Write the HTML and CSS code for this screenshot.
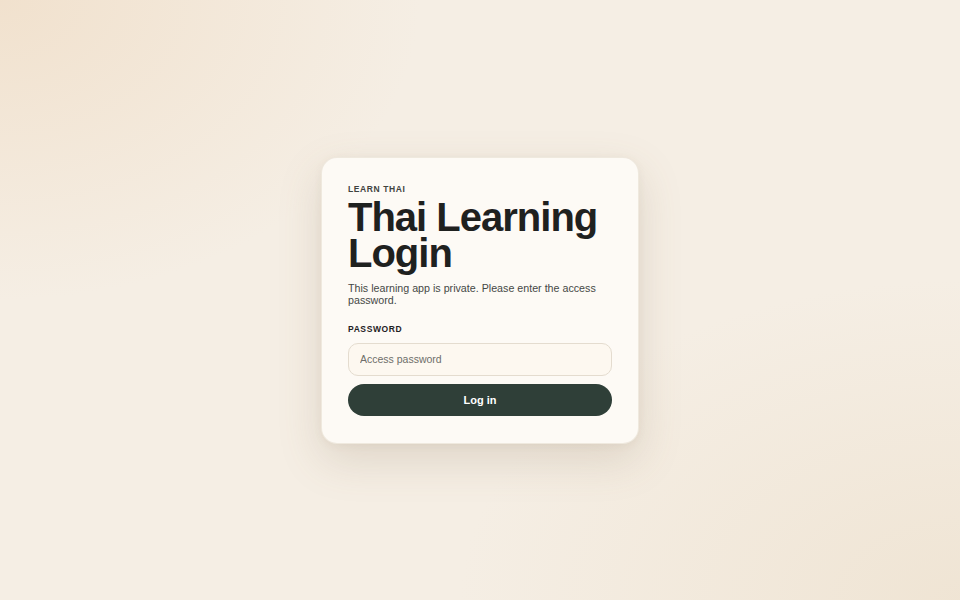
FILE: index.html
```html
<!DOCTYPE html>
<html lang="en">
<head>
<meta charset="utf-8">
<title>Thai Learning Login</title>
<link rel="stylesheet" href="styles.css">
</head>
<body>
<main class="page">
  <form class="card">
    <p class="eyebrow">LEARN THAI</p>
    <h1 class="title">Thai Learning Login</h1>
    <p class="lead">This learning app is private. Please enter the access password.</p>
    <label class="label" for="pw">PASSWORD</label>
    <input class="input" id="pw" type="password" placeholder="Access password">
    <button class="button" type="button">Log in</button>
  </form>
</main>
</body>
</html>
```
FILE: styles.css
```css
* { box-sizing: border-box; }
html, body { margin: 0; height: 100%; }
body {
  font-family: "Liberation Sans", Arial, sans-serif;
  background:
    radial-gradient(ellipse 420px 300px at 0% 0%, rgba(240, 222, 200, 0.8), rgba(240, 222, 200, 0) 100%),
    radial-gradient(ellipse 500px 320px at 100% 100%, rgba(238, 226, 208, 0.8), rgba(238, 226, 208, 0) 100%),
    #f5eee4;
  color: #1f211f;
}
.page {
  height: 100%;
  display: flex;
  align-items: center;
  justify-content: center;
}
.card {
  width: 318px;
  padding: 27px 26px 27px 26px;
  background: #fdfaf5;
  border: 1px solid rgba(225, 215, 200, 0.5);
  border-radius: 16px;
  box-shadow: 0 16px 44px rgba(120, 100, 70, 0.18), 0 2px 8px rgba(120, 100, 70, 0.06);
  display: flex;
  flex-direction: column;
}
.eyebrow {
  margin: 0;
  font-size: 8.5px;
  line-height: 9px;
  font-weight: 700;
  letter-spacing: 0.07em;
  color: #3f433f;
}
.title {
  margin: 5px 0 0;
  font-size: 40px;
  line-height: 36px;
  font-weight: 700;
  letter-spacing: -0.025em;
  color: #1f211f;
}
.lead {
  margin: 11px 0 0;
  font-size: 10.7px;
  line-height: 12px;
  color: #454845;
}
.label {
  margin-top: 19px;
  font-size: 8.5px;
  line-height: 9px;
  font-weight: 700;
  letter-spacing: 0.07em;
  color: #1f211f;
}
.input {
  margin-top: 9px;
  height: 33px;
  width: 100%;
  padding: 0 11px;
  border: 1px solid #e4dccf;
  border-radius: 10px;
  background: #fdf8f0;
  font-family: inherit;
  font-size: 10.5px;
  color: #333;
  outline: none;
}
.input::placeholder { color: #6e6e6a; }
.button {
  margin-top: 8px;
  height: 32px;
  width: 100%;
  border: 0;
  border-radius: 16px;
  background: #2f3f38;
  color: #ffffff;
  font-family: inherit;
  font-size: 11px;
  font-weight: 700;
}
```
